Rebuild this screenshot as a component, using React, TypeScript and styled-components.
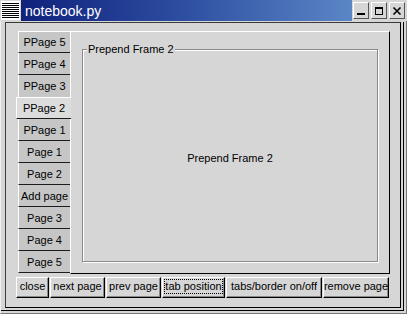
import React from "react";
import styled, { createGlobalStyle } from "styled-components";

const BG = "#d6d6d6";

const GlobalStyle = createGlobalStyle`
  html, body {
    margin: 0;
    padding: 0;
    background: ${BG};
  }
  body {
    font-family: "Liberation Sans", Arial, Helvetica, sans-serif;
  }
  * {
    box-sizing: border-box;
  }
`;

const Window = styled.div`
  width: 407px;
  height: 314px;
  display: flex;
  flex-direction: column;
  background: ${BG};
  overflow: hidden;
`;

const TitleBar = styled.div`
  display: flex;
  flex: none;
  height: 21px;
`;

const MenuIcon = styled.svg`
  display: block;
  flex: none;
`;

const Caption = styled.div`
  flex: 1;
  display: flex;
  align-items: center;
  padding-left: 4px;
  background: linear-gradient(to right, #10227c 0%, #2a4a9e 45%, #5b86c6 100%);
  color: #fff;
  font-size: 14px;
`;

const Controls = styled.div`
  display: flex;
  flex: none;
  gap: 2px;
  width: 55px;
  padding: 2px 0 0 1px;
`;

const ControlButton = styled.div`
  width: 16px;
  height: 17px;
  display: flex;
  align-items: center;
  justify-content: center;
  border: 1px solid;
  border-color: #fff #555 #555 #fff;
  background: ${BG};
`;

const Frame = styled.div`
  flex: 1;
  display: flex;
  padding: 1px 2px 2px 0;
  border-left: 1px solid #f0f0f0;
  border-right: 1px solid #777;
  border-bottom: 1px solid #777;
`;

const Inner = styled.div`
  flex: 1;
  display: flex;
  padding: 0 2px 2px 4px;
  border-right: 1px solid #000;
  border-bottom: 1px solid #000;
`;

const Body = styled.div`
  flex: 1;
  display: flex;
  flex-direction: column;
  gap: 3px;
  padding: 8px 10px 9px 10px;
  border: 1px solid;
  border-color: #3a3a3a #000 #000 #3a3a3a;
`;

const Notebook = styled.div`
  flex: 1;
  display: flex;
`;

const TabColumn = styled.div`
  width: 54px;
  flex: none;
  display: flex;
  flex-direction: column;
  align-items: flex-end;
`;

const Tab = styled.div<{ $selected?: boolean; $first?: boolean; $noBottom?: boolean }>`
  position: relative;
  z-index: ${(p) => (p.$selected ? 1 : 0)};
  width: ${(p) => (p.$selected ? 55 : 52)}px;
  margin-right: ${(p) => (p.$selected ? -1 : 0)}px;
  height: 22px;
  display: flex;
  align-items: center;
  justify-content: center;
  background: ${(p) => (p.$selected ? "#dcdcdc" : "#c6c6c6")};
  border-left: 1px solid #fff;
  border-top: ${(p) => (p.$selected || p.$first ? "1px solid #fff" : "none")};
  border-bottom: ${(p) => (p.$noBottom ? "none" : "1px solid #1c1c1c")};
  font-size: 11px;
  color: #000;
  white-space: nowrap;
`;

const Panel = styled.div`
  flex: 1;
  display: flex;
  padding: 17px 11px 11px 11px;
  border: 1px solid;
  border-color: #fff #000 #000 #fff;
`;

const LabelFrame = styled.div`
  position: relative;
  flex: 1;
  display: flex;
  align-items: center;
  justify-content: center;
  padding-top: 5px;
  border: 1px solid #8a8a8a;
  box-shadow: inset 1px 1px 0 #fff, 1px 1px 0 #fff;
  font-size: 11px;
  color: #000;
`;

const Legend = styled.span`
  position: absolute;
  top: -7px;
  left: 4px;
  padding: 0 1px;
  line-height: 13px;
  background: ${BG};
  font-size: 11px;
  white-space: nowrap;
`;

const ButtonRow = styled.div`
  display: flex;
  flex: none;
  gap: 1px;
`;

const Button = styled.div<{ $w: number }>`
  width: ${(p) => p.$w}px;
  height: 21px;
  display: flex;
  align-items: center;
  justify-content: center;
  padding-bottom: 2px;
  background: ${BG};
  border: 1px solid;
  border-color: #fff #000 #000 #fff;
  box-shadow: inset -1px -1px 0 #8a8a8a;
  font-size: 11px;
  color: #000;
  white-space: nowrap;
`;

const ButtonLabel = styled.span<{ $focus?: boolean }>`
  line-height: 13px;
  border: 1px ${(p) => (p.$focus ? "dotted #000" : "solid transparent")};
`;

const tabs = [
  "PPage 5",
  "PPage 4",
  "PPage 3",
  "PPage 2",
  "PPage 1",
  "Page 1",
  "Page 2",
  "Add page",
  "Page 3",
  "Page 4",
  "Page 5",
];
const selectedTab = 3;

const buttons = [
  { label: "close", w: 33 },
  { label: "next page", w: 55 },
  { label: "prev page", w: 55 },
  { label: "tab position", w: 63, focus: true },
  { label: "tabs/border on/off", w: 96 },
  { label: "remove page", w: 66 },
];

const Menu = () => (
  <MenuIcon width="21" height="21" viewBox="0 0 21 21">
    <rect x="1" y="1" width="19" height="19" fill="#fff" />
    {[3, 5, 7, 9, 11, 13, 15, 17].map((y) => (
      <rect key={y} x="2" y={y} width="17" height="1" fill="#000" />
    ))}
  </MenuIcon>
);

const App = () => {
  return (
    <Window>
      <GlobalStyle />
      <TitleBar>
        <Menu />
        <Caption>notebook.py</Caption>
        <Controls>
          <ControlButton>
            <svg width="10" height="10" viewBox="0 0 10 10">
              <rect x="1" y="7" width="8" height="2" fill="#000" />
            </svg>
          </ControlButton>
          <ControlButton>
            <svg width="10" height="10" viewBox="0 0 10 10">
              <rect x="1.5" y="1.5" width="7" height="7" fill="none" stroke="#000" />
              <rect x="1" y="1" width="8" height="2" fill="#000" />
            </svg>
          </ControlButton>
          <ControlButton>
            <svg width="10" height="10" viewBox="0 0 10 10">
              <path d="M1.5 1.5 L8.5 8.5 M8.5 1.5 L1.5 8.5" stroke="#000" strokeWidth="1.6" />
            </svg>
          </ControlButton>
        </Controls>
      </TitleBar>
      <Frame>
        <Inner>
          <Body>
            <Notebook>
              <TabColumn>
                {tabs.map((t, i) => (
                  <Tab
                    key={t}
                    $first={i === 0}
                    $selected={i === selectedTab}
                    $noBottom={i === selectedTab - 1}
                  >
                    {t}
                  </Tab>
                ))}
              </TabColumn>
              <Panel>
                <LabelFrame>
                  <Legend>Prepend Frame 2</Legend>
                  Prepend Frame 2
                </LabelFrame>
              </Panel>
            </Notebook>
            <ButtonRow>
              {buttons.map((b) => (
                <Button key={b.label} $w={b.w}>
                  <ButtonLabel $focus={b.focus}>{b.label}</ButtonLabel>
                </Button>
              ))}
            </ButtonRow>
          </Body>
        </Inner>
      </Frame>
    </Window>
  );
};

export default App;
